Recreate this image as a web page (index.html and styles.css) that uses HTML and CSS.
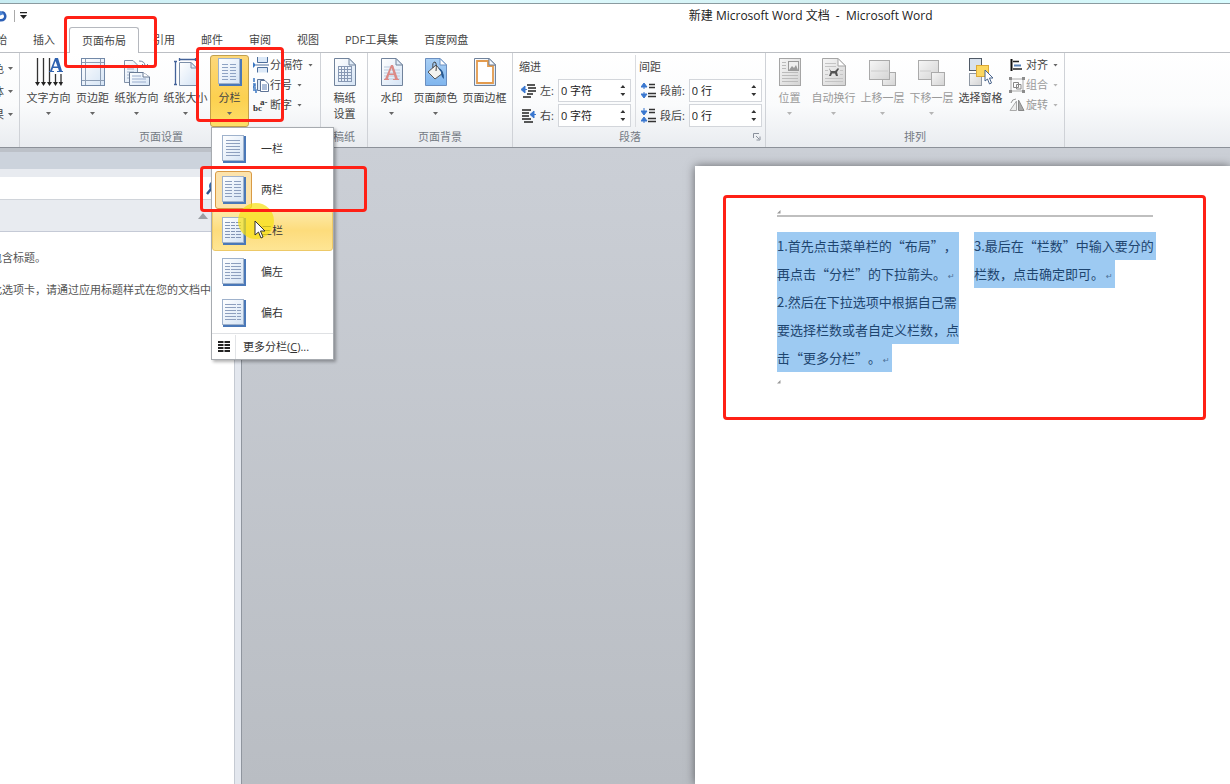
FILE: index.html
```html
<!DOCTYPE html>
<html lang="zh-CN">
<head>
<meta charset="utf-8">
<title>新建 Microsoft Word 文档 - Microsoft Word</title>
<link rel="stylesheet" href="styles.css">
</head>
<body>
<svg class="defs" aria-hidden="true">
  <defs>
    <linearGradient id="paper" x1="0" y1="0" x2="1" y2="1"><stop offset="0" stop-color="#fff"/><stop offset="1" stop-color="#d5e4f5"/></linearGradient>
    <linearGradient id="grey" x1="0" y1="0" x2="1" y2="1"><stop offset="0" stop-color="#f6f6f6"/><stop offset="1" stop-color="#d4d4d4"/></linearGradient>
    <linearGradient id="sky" x1="0" y1="0" x2="0" y2="1"><stop offset="0" stop-color="#a9cff4"/><stop offset="1" stop-color="#7fb5ee"/></linearGradient>
    <symbol id="sheet" viewBox="0 0 24 28"><path d="M1 27H23V1" fill="none" stroke="#4a78b8" stroke-width="2"/><rect x=".5" y=".5" width="21" height="25" fill="url(#paper)" stroke="#9fb2cc"/></symbol>
    <symbol id="fold" viewBox="0 0 24 28"><path d="M1.500.5H16L22.500 7V27.500H1.500Z" fill="url(#paper)" stroke="#71839c"/><path d="M16 .5V7H22.500Z" fill="#e2edf9" stroke="#71839c"/></symbol>
    <symbol id="greyfold" viewBox="0 0 24 28"><path d="M.5.5H16L23.500 8V27.500H.5Z" fill="url(#grey)" stroke="#a5a5a5"/><path d="M16 .5V8H23.500Z" fill="#fff" stroke="#a5a5a5"/></symbol>
  </defs>
</svg>
<div class="app">
  <div class="desktop-edge"></div>
  <header class="titlebar">
    <div class="quick">
      <svg width="9" height="14" viewBox="1 0 9 14"><path d="M0 11C5 12 7 9 6 6C5 3 3 3 1 4" fill="none" stroke="#2c5fb5" stroke-width="2.500"/><path d="M0 1L0 7L5 5Z" fill="#4e86d4"/></svg>
      <span class="quick-line"></span>
      <svg width="7" height="8" viewBox="0 0 7 8"><path d="M0 .5H7" stroke="#222" stroke-width="1.500"/><path d="M0 3H7L3.500 7Z" fill="#222"/></svg>
    </div>
    <h1 class="title">新建 Microsoft Word 文档&nbsp; -&nbsp; Microsoft Word</h1>
  </header>

  <nav class="tabs">
    <button class="tab">开始</button><button class="tab">插入</button><button class="tab active">页面布局</button><button class="tab">引用</button><button class="tab">邮件</button><button class="tab">审阅</button><button class="tab">视图</button><button class="tab">PDF工具集</button><button class="tab">百度网盘</button>
  </nav>

  <section class="ribbon">
    <div class="group theme">
      <button class="mini">颜色<i class="arrow"></i></button>
      <button class="mini">字体<i class="arrow"></i></button>
      <button class="mini">效果<i class="arrow"></i></button>
    </div>

    <div class="group setup">
      <div class="body">
        <button class="big wide">
          <svg width="28" height="28" viewBox="0 0 28 28"><path d="M2.500 0V26M8.500 0V26M14.500 0V26M20.500 16V26M26 16V26" stroke="#333" stroke-width="1.300"/><path d="M0 24H5L2.500 28ZM6 24H11L8.500 28ZM12 24H17L14.500 28ZM18 24H23L20.500 28ZM23.500 24H28L26 28Z" fill="#222"/><path d="M15 13L20 0H23L27 13H28V14H22V13H24L23 10H18L17 13H19V14H14V13ZM18.500 8.500H22.500L20.500 3Z" fill="#2f62b0"/></svg>
          <span>文字方向</span><i class="arrow"></i></button>
        <button class="big">
          <svg width="24" height="28" viewBox="0 0 24 28"><rect x=".5" y=".5" width="23" height="27" fill="url(#paper)" stroke="#7289a8"/><path d="M4.500 1V27M19.500 1V27M1 4.500H23M1 22.500H23" stroke="#8c9db4"/></svg>
          <span>页边距</span><i class="arrow"></i></button>
        <button class="big wide">
          <svg width="26" height="28" viewBox="0 0 26 28"><path d="M.5 2.500H9L13.500 7V24.500H.5Z" fill="url(#paper)" stroke="#8191a8"/><path d="M3 8H10M3 11H10M3 14H10M3 17H10M3 20H10" stroke="#a3b4cb"/><path d="M15 3Q21 3 21 8M18 6L21 9L24 6" fill="none" stroke="#7385a0"/><path d="M5.500 14.500H19L25.500 19V27.500H5.500Z" fill="url(#paper)" stroke="#687a94"/><path d="M19 14.500V19H25.500" fill="#fff" stroke="#687a94"/><path d="M8 18H17M8 21H22M8 24H22" stroke="#99accc"/></svg>
          <span>纸张方向</span><i class="arrow"></i></button>
        <button class="big wide">
          <svg width="24" height="28" viewBox="0 0 24 28"><path d="M1.500 3V26M0 3.500H3M0 26.500H3M5 1.500H21M5.500 0V3M21.500 0V3" stroke="#44639a" stroke-width="1.300"/><path d="M5.500 4.500H17L22.500 10V27.500H5.500Z" fill="url(#paper)" stroke="#7c8fa9"/><path d="M17 4.500V10H22.500Z" fill="#e2edf9" stroke="#7c8fa9"/></svg>
          <span>纸张大小</span><i class="arrow"></i></button>
        <button class="big open" aria-expanded="true">
          <svg width="24" height="28" viewBox="0 0 24 28"><use href="#sheet"/><path d="M4 6.500H10M4 9.500H10M4 12.500H10M4 15.500H10M4 18.500H10M4 21.500H10M12 6.500H18M12 9.500H18M12 12.500H18M12 15.500H18M12 18.500H18M12 21.500H18" stroke="#8ea3c4"/></svg>
          <span>分栏</span><i class="arrow"></i></button>
        <div class="stack">
          <button class="small"><svg width="16" height="16" viewBox="0 0 16 16"><path d="M0 5L3 8L0 11Z" fill="#3c78c3"/><path d="M4.500 0V5.500H14.500V0M4.500 15.500V10.500H14.500V15.500" fill="#dce9f8" stroke="#4e6f9c"/><path d="M3 8H16" stroke="#4e6f9c"/></svg>分隔符<i class="arrow"></i></button>
          <button class="small"><svg width="16" height="16" viewBox="0 0 16 16"><path d="M1 1V5M0 7H2V9H0V11H3M0 13H3V16" fill="none" stroke="#3c78c3" stroke-width="1.500"/><path d="M4.500 2.500H11V13.500H4.500Z" fill="#dce9f8" stroke="#5d7396"/><path d="M7.500 3.500H12L15.500 7V14.500H7.500Z" fill="#fff" stroke="#5d7396"/><path d="M9 8H14M9 10H14M9 12H14" stroke="#5b7db2"/></svg>行号<i class="arrow"></i></button>
          <button class="small"><svg width="16" height="16" viewBox="0 0 16 16"><text x="0" y="14" class="hyph">bc</text><text x="7" y="8" class="hyph">a-</text></svg>断字<i class="arrow"></i></button>
        </div>
      </div>
      <div class="caption offset">页面设置</div>

      <div class="menu" role="menu">
        <button class="item" role="menuitem"><span class="thumb"><svg width="24" height="28" viewBox="0 0 24 28"><use href="#sheet"/><path d="M4 5.500H18M4 8.500H18M4 11.500H18M4 14.500H18M4 17.500H18M4 20.500H18" stroke="#8d9fbe"/></svg></span>一栏</button>
        <button class="item chosen" role="menuitem"><span class="thumb"><svg width="24" height="28" viewBox="0 0 24 28"><use href="#sheet"/><path d="M3 5.500H10M3 8.500H10M3 11.500H10M3 14.500H10M3 17.500H10M3 20.500H10M12 5.500H19M12 8.500H19M12 11.500H19M12 14.500H19M12 17.500H19M12 20.500H19" stroke="#8d9fbe"/></svg></span>两栏</button>
        <button class="item hover" role="menuitem"><span class="thumb"><svg width="24" height="28" viewBox="0 0 24 28"><use href="#sheet"/><path d="M3 5.500H19M3 8.500H19M3 11.500H19M3 14.500H19M3 17.500H19M3 20.500H19" stroke="#8395b5" stroke-dasharray="5 1 4 1 5"/></svg></span>三栏</button>
        <button class="item" role="menuitem"><span class="thumb"><svg width="24" height="28" viewBox="0 0 24 28"><use href="#sheet"/><path d="M3 5.500H19M3 8.500H19M3 11.500H19M3 14.500H19M3 17.500H19M3 20.500H19" stroke="#8d9fbe" stroke-dasharray="5 1 20"/></svg></span>偏左</button>
        <button class="item" role="menuitem"><span class="thumb"><svg width="24" height="28" viewBox="0 0 24 28"><use href="#sheet"/><path d="M3 5.500H19M3 8.500H19M3 11.500H19M3 14.500H19M3 17.500H19M3 20.500H19" stroke="#8d9fbe" stroke-dasharray="11 1 20"/></svg></span>偏右</button>
        <button class="more" role="menuitem"><span class="gutter"><svg width="12" height="11" viewBox="0 0 12 11"><path d="M0 1H12M0 4H12M0 7H12M0 10H12" stroke="#222" stroke-width="1.800" stroke-dasharray="5.500 1"/></svg></span><span>更多分栏(<u>C</u>)...</span></button>
        <span class="spot"></span>
        <svg class="pointer" width="12" height="19" viewBox="0 0 12 19"><path d="M1 1V15L4.500 12L7 18L9 17L6.500 11H11Z" fill="#fff" stroke="#333"/></svg>
      </div>
    </div>

    <div class="group draft">
      <div class="body">
        <button class="big">
          <svg width="24" height="28" viewBox="0 0 24 28"><use href="#fold"/><path d="M5 8.500H19M5 11.500H19M5 14.500H19M5 17.500H19M5 20.500H19M5 23.500H19M5.500 8V24M8.500 8V24M11.500 8V24M14.500 8V24M18.500 8V24" stroke="#8798b4"/></svg>
          <span>稿纸<br>设置</span></button>
      </div>
      <div class="caption">稿纸</div>
    </div>

    <div class="group back">
      <div class="body">
        <button class="big"><svg width="24" height="28" viewBox="0 0 24 28"><use href="#fold"/><path d="M4 9H14M4 12H20M4 15H20M4 18H20M4 21H20" stroke="#bbc9dd"/><path d="M5 21L11 7H13L18 21H19V22H13V21H15L14 17H9L8 21H9V22H4V21ZM9.500 15.500H13.500L11.500 10Z" fill="#dc8a86"/></svg><span>水印</span><i class="arrow"></i></button>
        <button class="big wide"><svg width="24" height="28" viewBox="0 0 24 28"><path d="M1.500.5H16L22.500 7V27.500H1.500Z" fill="url(#sky)" stroke="#6b8fc0"/><path d="M16 .5V7H22.500Z" fill="#fff" stroke="#6b8fc0"/><path d="M4 14L12 7L19 15L11 21Z" fill="#f3f3f0" stroke="#555"/><path d="M9 10Q8 4 11 4Q13 5 12 13" fill="none" stroke="#444"/><path d="M14 10Q20 11 20 21Q17 19 17 14Z" fill="#275a94"/></svg><span>页面颜色</span><i class="arrow"></i></button>
        <button class="big wide"><svg width="24" height="28" viewBox="0 0 24 28"><use href="#fold"/><path d="M4 3H15V8H20V25H4Z" fill="#fff" stroke="#e39b4e" stroke-width="1.800"/><path d="M16 .5V7H22.500Z" fill="#f5f9fe" stroke="#71839c"/></svg><span>页面边框</span></button>
      </div>
      <div class="caption">页面背景</div>
    </div>

    <div class="group para">
      <div class="body">
        <div class="fields">
          <span class="head">缩进</span>
          <div class="field"><svg width="16" height="14" viewBox="0 0 16 14"><path d="M6 1H14M7 4H15M7 7H15M6 10H12M2 13H10" stroke="#222" stroke-width="1.500"/><path d="M0 5.500L4 2V9ZM3 5.500H6" fill="#3977cf" stroke="#3977cf"/></svg><label for="left">左:</label><span class="spin"><input id="left" value="0 字符"><span class="steps"><button class="up" aria-label="增加"></button><button class="down" aria-label="减少"></button></span></span></div>
          <div class="field"><svg width="16" height="14" viewBox="0 0 16 14"><path d="M1 1H10M1 4H8M1 7H8M1 10H10M3 13H12" stroke="#222" stroke-width="1.500"/><path d="M9 5.500L13 2V9ZM12 5.500H15" fill="#3977cf" stroke="#3977cf"/></svg><label for="right">右:</label><span class="spin"><input id="right" value="0 字符"><span class="steps"><button class="up" aria-label="增加"></button><button class="down" aria-label="减少"></button></span></span></div>
        </div>
        <div class="fields spacing">
          <span class="head">间距</span>
          <div class="field"><svg width="16" height="16" viewBox="0 0 16 16"><path d="M8 1.500H14M8 4.500H14M7 10.500H15M7 13.500H15" stroke="#333" stroke-width="1.500"/><path d="M0 4L3 0L6 4ZM0 11L3 15L6 11ZM3 3V6M3 9V12" fill="#3977cf" stroke="#3977cf"/></svg><label for="before">段前:</label><span class="spin"><input id="before" value="0 行"><span class="steps"><button class="up" aria-label="增加"></button><button class="down" aria-label="减少"></button></span></span></div>
          <div class="field"><svg width="16" height="16" viewBox="0 0 16 16"><path d="M8 1.500H14M8 4.500H14M7 10.500H15M7 13.500H15" stroke="#333" stroke-width="1.500"/><path d="M0 3L3 7L6 3ZM0 13L3 9L6 13ZM3 0V4M3 11V15" fill="#3977cf" stroke="#3977cf"/></svg><label for="after">段后:</label><span class="spin"><input id="after" value="0 行"><span class="steps"><button class="up" aria-label="增加"></button><button class="down" aria-label="减少"></button></span></span></div>
        </div>
      </div>
      <div class="caption offset">段落<button class="launcher" aria-label="段落设置"><svg width="8" height="8" viewBox="0 0 8 8"><path d="M.5 5V.5H6M3 3L6 6M7 3.500V7H3.500" fill="none" stroke="#8a919c"/></svg></button></div>
    </div>

    <div class="group arrange">
      <div class="body">
        <button class="big" disabled><svg width="24" height="28" viewBox="0 0 24 28"><rect x="1.500" y=".5" width="21" height="27" fill="url(#grey)" stroke="#a5a5a5"/><path d="M4 4.500H8M4 7.500H8M4 10.500H8M4 14.500H20M4 17.500H20M4 20.500H20M4 23.500H20" stroke="#bbb"/><rect x="10.500" y="3.500" width="10" height="9" fill="#eee" stroke="#999"/><path d="M11 12L14 8L16 10L18 7L20 12Z" fill="#999"/></svg><span>位置</span><i class="arrow"></i></button>
        <button class="big wide" disabled><svg width="24" height="28" viewBox="0 0 24 28"><use href="#greyfold"/><path d="M3 5.500H14M3 8.500H14M3 12.500H6M18 12.500H21M3 16.500H6M18 16.500H21M3 20.500H21M3 23.500H21" stroke="#c4c4c4"/><path d="M7 10L9 13H13L16 10L17 11L15 14L16 18H14L13 15.500H10L9 18H7L8.500 14Z" fill="#555"/></svg><span>自动换行</span><i class="arrow"></i></button>
        <button class="big wide" disabled><svg width="28" height="28" viewBox="0 0 28 28"><rect x="13.500" y="14.500" width="13" height="13" fill="url(#grey)" stroke="#aaa"/><rect x=".5" y="2.500" width="20" height="19" fill="url(#grey)" stroke="#aaa"/><path d="M2 13H19" stroke="#ccc"/></svg><span>上移一层</span><i class="arrow"></i></button>
        <button class="big wide" disabled><svg width="28" height="28" viewBox="0 0 28 28"><rect x=".5" y="2.500" width="20" height="19" fill="url(#grey)" stroke="#aaa"/><path d="M2 13H13" stroke="#ccc"/><rect x="13.500" y="14.500" width="13" height="13" fill="url(#grey)" stroke="#aaa"/></svg><span>下移一层</span><i class="arrow"></i></button>
        <button class="big wide"><svg width="26" height="28" viewBox="0 0 26 28"><rect x="1.500" y=".5" width="12" height="12" fill="#d8e1ec" stroke="#4f5966"/><rect x="1.500" y="15.500" width="12" height="12" fill="url(#grey)" stroke="#8f98a3"/><rect x="8.500" y="7.500" width="12" height="11" fill="#fcd75f" stroke="#dca938"/><path d="M17 12V23L19.500 21L21.500 26L23.500 25L21.500 20H25Z" fill="#fff" stroke="#49648c"/></svg><span>选择窗格</span></button>
        <div class="stack">
          <button class="small"><svg width="16" height="16" viewBox="0 0 16 16"><path d="M2.500 2V14" stroke="#111" stroke-width="2"/><path d="M4 4.500H10M4 12H13" stroke="#222" stroke-width="1.500"/><path d="M5 8.500H12" stroke="#5a83b8" stroke-width="2"/></svg>对齐<i class="arrow"></i></button>
          <button class="small" disabled><svg width="16" height="16" viewBox="0 0 16 16"><path d="M2 2H14V14H2Z" fill="none" stroke="#aaa"/><path d="M4.500 5.500H9.500V10.500H4.500ZM7.500 7.500H12V12H7.500Z" fill="none" stroke="#888"/><path d="M0 0H3V3H0ZM13 0H16V3H13ZM0 13H3V16H0ZM13 13H16V16H13Z" fill="#8c8c8c"/></svg>组合<i class="arrow"></i></button>
          <button class="small" disabled><svg width="16" height="16" viewBox="0 0 16 16"><path d="M1 13.500H7.500V4Z" fill="#eee" stroke="#aaa"/><path d="M9.500 3V13.500H15Z" fill="#a9a9a9" stroke="#888"/><path d="M2 6Q3 2 7 2" fill="none" stroke="#999"/></svg>旋转<i class="arrow"></i></button>
        </div>
      </div>
      <div class="caption">排列</div>
    </div>
  </section>

  <main class="workspace">
    <aside class="navpane">
      <div class="pane-head"></div>
      <div class="search"><input type="text" aria-label="搜索文档"><svg width="14" height="14" viewBox="0 0 14 14"><circle cx="8" cy="5" r="4" fill="none" stroke="#3767a8" stroke-width="2"/><path d="M5 8L1 13" stroke="#2d5790" stroke-width="2.500"/></svg></div>
      <div class="pane-bar"><svg width="10" height="6" viewBox="0 0 10 6"><path d="M0 6L5 0L10 6Z" fill="#9b9fa5"/></svg></div>
      <div class="pane-body"><p>包含标题。</p><p>此选项卡，请通过应用标题样式在您的文档中</p></div>
    </aside>
    <div class="splitter"></div>
    <div class="canvas">
      <article class="page">
        <div class="rule"><svg width="4" height="4" viewBox="0 0 4 4"><path d="M0 3.500H3.500V0Z" fill="#999"/></svg></div>
        <div class="columns">
          <div class="col">
            <p><span>1.首先点击菜单栏的“布局”，</span><span>再点击“分栏”的下拉箭头。<b class="ret">↵</b></span></p>
            <p><span>2.然后在下拉选项中根据自己需</span><span>要选择栏数或者自定义栏数，点</span></p>
            <p class="fit"><span>击“更多分栏”。<b class="ret">↵</b></span></p>
            <svg class="end" width="4" height="4" viewBox="0 0 4 4"><path d="M0 3.500H3.500V0Z" fill="#999"/></svg>
          </div>
          <div class="col">
            <p><span>3.最后在“栏数”中输入要分的</span></p>
            <p class="fit"><span>栏数，点击确定即可。<b class="ret">↵</b></span></p>
          </div>
        </div>
      </article>
    </div>
  </main>

  <div class="mark mark-tab"></div>
  <div class="mark mark-button"></div>
  <div class="mark mark-option"></div>
  <div class="mark mark-text"></div>
</div>
</body>
</html>
```

FILE: styles.css
```css
* { box-sizing: border-box; }
body {
  margin: 0;
  font: 11px/16px "Open Sans", "Noto Sans CJK SC", sans-serif;
  color: #444;
  background: #fff;
}
button, input { font: inherit; color: inherit; background: none; border: 0; padding: 0; margin: 0; }
button { white-space: nowrap; }
svg { display: block; flex: none; }
p, h1 { margin: 0; }
.defs { position: absolute; width: 0; height: 0; }
.app { position: relative; display: flex; flex-direction: column; min-height: 100vh; overflow: hidden; }

.desktop-edge { height: 4px; background: linear-gradient(90deg, #c8ecf2, #e0fbff 40%, #cfeef0 70%, #d9fcff); border-bottom: 1px solid #8b9ba0; }
.titlebar { display: flex; align-items: center; height: 23px; }
.quick { display: flex; align-items: center; gap: 5px; flex: none; width: 56%; }
.quick-line { width: 1px; height: 12px; background: #aaa; }
.title { font-size: 12px; font-weight: 400; color: #222; white-space: nowrap; }

.tabs { display: flex; height: 26px; padding-right: 8px; border-bottom: 1px solid #bcbfc4; }
.tab { height: 26px; padding: 0 13px; }
.tab:first-child { margin-left: -28px; }
.tab.active { background: #fff; border: 1px solid #b5b8be; border-bottom: 0; border-radius: 3px 3px 0 0; padding: 0 12px; margin: 0 1px; }

.ribbon { display: flex; height: 95px; background: linear-gradient(#fff, #fafbfc 55%, #e9ecf0); border-bottom: 1px solid #8c9199; }
.group { position: relative; display: flex; flex-direction: column; flex: none; border-right: 1px solid #cfd2d7; }
.body { display: flex; height: 74px; padding: 2px 0 0 4px; }
.caption { position: relative; height: 20px; line-height: 20px; text-align: center; color: #747a83; }
.caption.offset { padding-right: 18px; }
.theme { width: 20px; overflow: hidden; align-items: flex-end; padding: 4px 6px 0 0; }
.mini { display: flex; align-items: center; gap: 4px; height: 23px; }
.setup { width: 301px; }
.draft { width: 47px; }
.back { width: 145px; }
.para { width: 253px; }
.arrange { width: 299px; }

.big { display: flex; flex-direction: column; align-items: center; width: 39px; height: 72px; padding: 2px 0 0; border: 1px solid transparent; border-radius: 3px; }
.big.wide { width: 49px; }
.big > span { margin-top: 4px; }
.arrow { width: 5px; height: 3px; background: #666; clip-path: polygon(0 0, 100% 0, 50% 100%); }
.big .arrow { margin-top: 6px; }
.open { background: linear-gradient(#fdd87a, #fcd04f 60%, #fddf68); border-color: #c2a04d; }
button:disabled { color: #9a9a9a; }
button:disabled .arrow { background: #b5b5b5; }
.stack { display: flex; flex-direction: column; padding-left: 4px; }
.small { display: flex; align-items: center; height: 20px; gap: 1px; }
.small .arrow { margin-left: 4px; }
.hyph { font: bold 9px "Liberation Serif", serif; fill: #333; }

.fields { display: flex; flex-direction: column; gap: 2px; padding: 2px 4px 0 2px; }
.fields.spacing { padding-left: 3px; border-left: 1px solid #dadce0; }
.head { height: 20px; line-height: 20px; }
.field { display: flex; align-items: center; height: 23px; padding-left: 2px; }
.field label { flex: none; padding: 0 4px 0 3px; white-space: nowrap; }
.spin { display: flex; flex: none; width: 73px; height: 23px; background: #fff; border: 1px solid #d3d6db; }
.spin input { flex: 1; min-width: 0; padding-left: 2px; color: #222; }
.steps { display: flex; flex-direction: column; justify-content: space-evenly; width: 14px; align-items: center; }
.up, .down { width: 5px; height: 3px; background: #333; }
.up { clip-path: polygon(50% 0, 100% 100%, 0 100%); }
.down { clip-path: polygon(0 0, 100% 0, 50% 100%); }
.launcher { position: absolute; right: 4px; top: 6px; }

.menu { position: absolute; z-index: 2; left: 191px; top: 74px; width: 123px; background: #fff; border: 1px solid #a7abb0; box-shadow: 2px 2px 3px rgba(0, 0, 0, .3); }
.item { display: flex; align-items: center; gap: 9px; width: 100%; height: 41px; padding-left: 2px; border: 1px solid transparent; color: #333; }
.thumb { display: flex; align-items: center; justify-content: center; width: 37px; height: 38px; border: 1px solid transparent; border-radius: 3px; }
.chosen .thumb { background: #fce3ac; border-color: #d99a45; }
.hover { background: linear-gradient(#fdeaa9, #fddc7c 50%, #fee594); border-color: #edc968; border-radius: 3px; }
.more { display: flex; align-items: center; width: 100%; height: 26px; gap: 7px; border-top: 1px solid #dfe1e4; color: #333; }
.gutter { display: flex; align-items: center; justify-content: center; width: 24px; height: 24px; border-right: 1px solid #e2e4e7; }
.spot { position: absolute; left: 26px; top: 75px; width: 36px; height: 36px; border-radius: 50%; background: rgba(247, 225, 20, .72); }
.pointer { position: absolute; left: 42px; top: 92px; }

.workspace { flex: 1; display: flex; background: linear-gradient(#cbcfd6, #b9bdc3); }
.navpane { display: flex; flex-direction: column; flex: none; width: 234px; background: #fff; overflow: hidden; border-top: 4px solid #bcc1c8; }
.pane-head { height: 17px; background: #ccd3dc; }
.search { display: flex; align-items: center; height: 31px; border-top: 8px solid #e8ebf0; border-bottom: 1px solid #d0d4da; }
.search input { width: 206px; height: 22px; }
.pane-bar { display: flex; align-items: center; justify-content: flex-end; height: 32px; padding-right: 26px; background: #e8ebf0; border-bottom: 1px solid #c5cad6; }
.pane-body { margin-left: -9px; padding-top: 10px; white-space: nowrap; color: #555; }
.pane-body p { line-height: 32px; }
.splitter { flex: none; width: 8px; background: #e3e7ee; border-left: 1px solid #c5cad2; border-right: 1px solid #8f959e; }
.canvas { flex: 1; display: flex; padding: 18px 0 0 453px; }
.page { flex: 1; padding: 44px 70px 0 82px; background: #fff; box-shadow: 0 0 9px rgba(0, 0, 0, .5); }
.rule { height: 7px; border-bottom: 2px solid #bfbfbf; width: 376px; }
.columns { display: flex; gap: 15px; padding-top: 15px; font-family: "Noto Sans CJK SC", sans-serif; font-size: 13px; line-height: 28px; color: #1e456f; white-space: nowrap; text-spacing-trim: space-all; }
.col { flex: none; width: 182px; }
.col p { background: #9dcaf2; }
.col p span { display: block; height: 28px; }
.col .fit { width: fit-content; padding-right: 2px; }
.ret { font: 8px "DejaVu Sans", sans-serif; color: #4c7198; padding-left: 2px; }
.end { margin-top: 8px; }

.mark { position: absolute; z-index: 3; border: 3px solid #ff2015; border-radius: 4px; pointer-events: none; }
.mark-tab { left: 64px; top: 16px; width: 93px; height: 52px; }
.mark-button { left: 196px; top: 47px; width: 88px; height: 75px; }
.mark-option { left: 200px; top: 166px; width: 167px; height: 46px; }
.mark-text { left: 723px; top: 195px; width: 483px; height: 225px; }
```
